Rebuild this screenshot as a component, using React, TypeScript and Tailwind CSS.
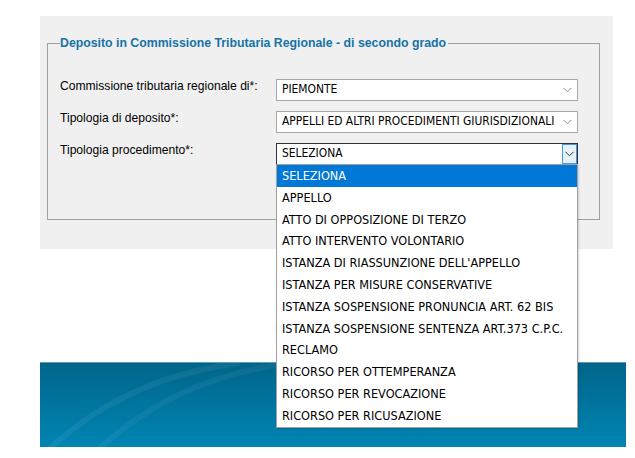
import React from 'react';

const options = [
  'SELEZIONA',
  'APPELLO',
  'ATTO DI OPPOSIZIONE DI TERZO',
  'ATTO INTERVENTO VOLONTARIO',
  "ISTANZA DI RIASSUNZIONE DELL'APPELLO",
  'ISTANZA PER MISURE CONSERVATIVE',
  'ISTANZA SOSPENSIONE PRONUNCIA ART. 62 BIS',
  'ISTANZA SOSPENSIONE SENTENZA ART.373 C.P.C.',
  'RECLAMO',
  'RICORSO PER OTTEMPERANZA',
  'RICORSO PER REVOCAZIONE',
  'RICORSO PER RICUSAZIONE',
];

const Chevron: React.FC<{ color: string }> = ({ color }) => (
  <svg width="9" height="6" viewBox="0 0 9 6" fill="none">
    <path d="M0.5 0.8 L4.5 4.8 L8.5 0.8" stroke={color} strokeWidth="1" />
  </svg>
);

const Select: React.FC<{ value: string; open?: boolean }> = ({ value, open }) => (
  <div
    className={`relative w-[302px] h-[22px] bg-white border flex items-center ${
      open ? 'border-[#333333]' : 'border-[#a6a6a6]'
    }`}
  >
    <span className="pl-[5px] text-[11.9px] text-black font-['DejaVu_Sans_Condensed',sans-serif] leading-none">
      {value}
    </span>
    {open ? (
      <div className="absolute right-0 top-0 h-full w-[15px] bg-[#e5f1fb] border border-[#4a98d9] flex items-center justify-center">
        <Chevron color="#333333" />
      </div>
    ) : (
      <div className="absolute right-[5px] top-0 h-full flex items-center">
        <Chevron color="#8c8c8c" />
      </div>
    )}
    {open && (
      <div className="absolute left-[-1px] top-[20px] z-10 w-[302px] bg-white border border-[#a0a0a0] shadow-[1px_1px_2px_rgba(0,0,0,0.15)]">
        {options.map((o, i) => (
          <div
            key={o}
            className={`h-[21.8px] flex items-center pl-[5px] pt-px text-[12.6px] font-['DejaVu_Sans_Condensed',sans-serif] ${
              i === 0 ? 'bg-[#0078d7] text-white' : 'text-black'
            }`}
          >
            {o}
          </div>
        ))}
      </div>
    )}
  </div>
);

const rows = [
  { label: 'Commissione tributaria regionale di*:', value: 'PIEMONTE' },
  { label: 'Tipologia di deposito*:', value: 'APPELLI ED ALTRI PROCEDIMENTI GIURISDIZIONALI' },
  { label: 'Tipologia procedimento*:', value: 'SELEZIONA', open: true },
];

export default function App() {
  return (
    <div className="min-h-[458px] bg-white pl-10 pt-4 font-['Liberation_Sans',Arial,sans-serif]">
      <div className="w-[573px] h-[233px] bg-[#f0f0f0] pl-[7px] pt-[27px]">
        {/* fieldset */}
        <div className="relative w-[553px] h-[177px] border border-[#a0a0a0] pl-[12px] pt-[35px]">
          <span className="absolute left-[12px] top-[-9px] bg-[#f0f0f0] pr-[2px] text-[12.3px] leading-[16px] text-[#1673a8] font-bold">
            Deposito in Commissione Tributaria Regionale - di secondo grado
          </span>
          <div className="flex flex-col gap-[10px]">
            {rows.map((r) => (
              <div key={r.label} className="flex items-start">
                <div className="w-[216px] text-[12.1px] leading-[15px] text-black">{r.label}</div>
                <Select value={r.value} open={r.open} />
              </div>
            ))}
          </div>
        </div>
      </div>

      {/* footer band */}
      <div className="relative mt-[113px] w-[586px] h-[85px] overflow-hidden border-t border-[#5e9db4] bg-gradient-to-b from-[#00658a] to-[#0085b3]">
        <svg className="absolute inset-0" width="586" height="85" viewBox="0 0 586 85" fill="none">
          <path d="M10 85 C 60 40, 120 10, 200 0" stroke="rgba(255,255,255,0.06)" strokeWidth="6" />
          <path d="M60 85 C 110 40, 170 10, 250 0" stroke="rgba(255,255,255,0.05)" strokeWidth="6" />
        </svg>
      </div>
    </div>
  );
}
